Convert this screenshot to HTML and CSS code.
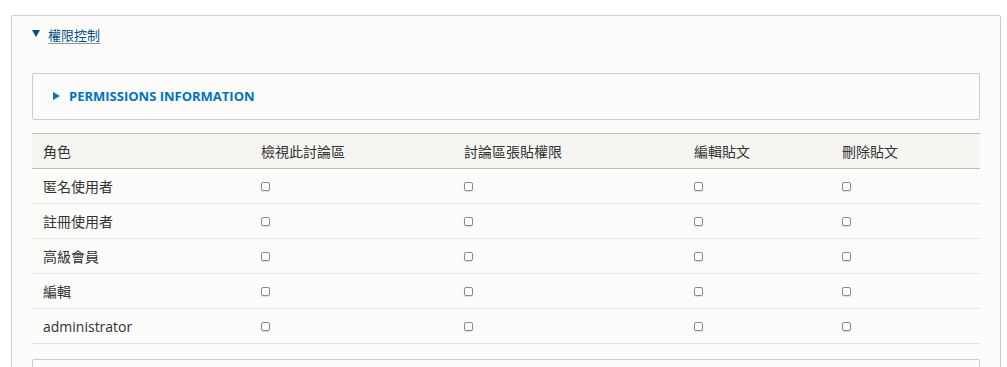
FILE: index.html
```html
<!DOCTYPE html>
<html lang="zh-Hant">
<head>
  <meta charset="UTF-8">
  <title>權限控制</title>
  <link rel="stylesheet" href="styles.css">
</head>
<body>
  <div class="fieldset">
    <div class="summary">
      <svg class="arrow-down" width="8" height="7" viewBox="0 0 8 7"><path d="M0 0H8L4 7Z" fill="#004f80"/></svg>
      <span class="summary-text">權限控制</span>
    </div>

    <div class="details">
      <svg class="arrow-right" width="7" height="8" viewBox="0 0 7 8"><path d="M0 0L7 4L0 8Z" fill="#0074bd"/></svg>
      <span class="details-title">PERMISSIONS INFORMATION</span>
    </div>

    <table class="perm-table">
      <colgroup>
        <col class="c1"><col class="c2"><col class="c3"><col class="c4"><col class="c5">
      </colgroup>
      <thead>
        <tr>
          <th>角色</th>
          <th>檢視此討論區</th>
          <th>討論區張貼權限</th>
          <th>編輯貼文</th>
          <th>刪除貼文</th>
        </tr>
      </thead>
      <tbody>
        <tr>
          <td>匿名使用者</td>
          <td><input type="checkbox"></td>
          <td><input type="checkbox"></td>
          <td><input type="checkbox"></td>
          <td><input type="checkbox"></td>
        </tr>
        <tr>
          <td>註冊使用者</td>
          <td><input type="checkbox"></td>
          <td><input type="checkbox"></td>
          <td><input type="checkbox"></td>
          <td><input type="checkbox"></td>
        </tr>
        <tr>
          <td>高級會員</td>
          <td><input type="checkbox"></td>
          <td><input type="checkbox"></td>
          <td><input type="checkbox"></td>
          <td><input type="checkbox"></td>
        </tr>
        <tr>
          <td>編輯</td>
          <td><input type="checkbox"></td>
          <td><input type="checkbox"></td>
          <td><input type="checkbox"></td>
          <td><input type="checkbox"></td>
        </tr>
        <tr>
          <td>administrator</td>
          <td><input type="checkbox"></td>
          <td><input type="checkbox"></td>
          <td><input type="checkbox"></td>
          <td><input type="checkbox"></td>
        </tr>
      </tbody>
    </table>

    <div class="details next"></div>
  </div>
</body>
</html>
```

FILE: styles.css
```css
body {
  margin: 0;
  padding: 15px 0 0 11px;
  background: #fff;
  font-family: "Open Sans", "Noto Sans CJK TC", sans-serif;
  color: #333;
  font-size: 14px;
}
.fieldset {
  width: 948px;
  height: 400px;
  border: 1px solid #ccc;
  border-radius: 2px;
  background: #fcfcfa;
  padding: 8px 20px 0 20px;
}
.summary {
  display: flex;
  align-items: center;
  height: 20px;
  margin-bottom: 29px;
  color: #004f80;
}
.arrow-down {
  margin-right: 8px;
  margin-top: -1px;
}
.summary-text {
  font-size: 13px;
  text-decoration: underline;
  text-decoration-color: #7a9cb3;
  text-underline-offset: 3px;
}
.details {
  display: flex;
  align-items: center;
  height: 20px;
  padding: 12px 20px 13px 20px;
  border: 1px solid #ccc;
  border-radius: 2px;
  background: #fcfcfa;
}
.arrow-right {
  margin-right: 9px;
}
.details-title {
  color: #0074bd;
  font-size: 13px;
  font-weight: 700;
}
.perm-table {
  width: 948px;
  margin-top: 13px;
  border-collapse: collapse;
  table-layout: fixed;
}
.c1 { width: 218px; }
.c2 { width: 203px; }
.c3 { width: 230px; }
.c4 { width: 148px; }
.c5 { width: 149px; }
.perm-table th {
  background: #f5f5f2;
  border-top: 1px solid #bfbfba;
  border-bottom: 1px solid #bfbfba;
  font-weight: 400;
  text-align: left;
  height: 34px;
  padding: 0 11px;
  color: #333;
}
.perm-table td {
  height: 34px;
  padding: 0 11px;
  border-bottom: 1px solid #e6e4df;
  color: #333;
}
.perm-table input[type="checkbox"] {
  appearance: none;
  display: block;
  width: 9px;
  height: 9px;
  margin: 0;
  border: 1px solid #8a8a8a;
  border-radius: 2px;
  background: #fff;
  box-shadow: 0 1px 1px rgba(0, 0, 0, 0.12);
}
.details.next {
  margin-top: 15px;
  height: 40px;
  padding: 0;
}
```
